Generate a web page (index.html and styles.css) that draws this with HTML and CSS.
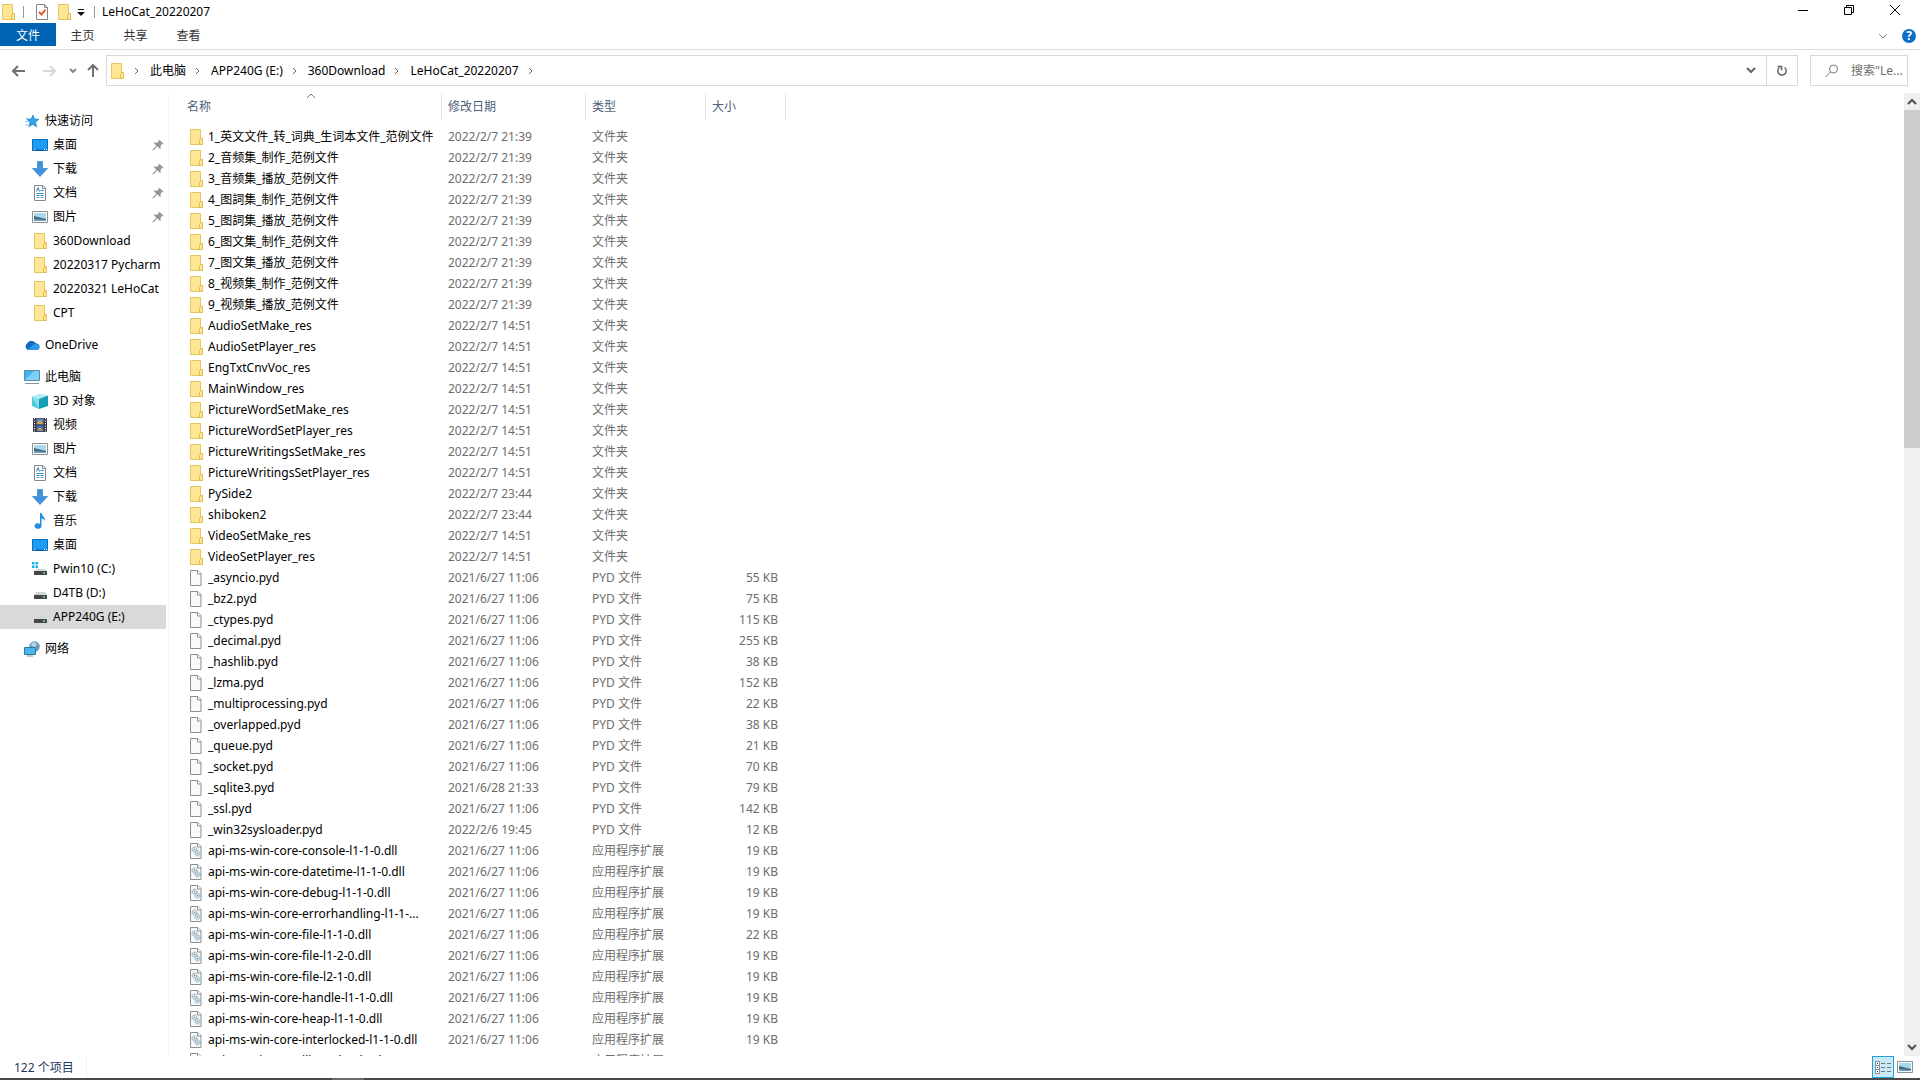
FILE: index.html
```
<!DOCTYPE html>
<html lang="zh-CN">
<head>
<meta charset="utf-8">
<title>LeHoCat_20220207</title>
<link rel="stylesheet" href="styles.css">
</head>
<body>
<svg class="sprite" aria-hidden="true">
  <symbol id="folder" viewBox="0 0 16 18"><path d="M2.500 1.500h10v15h-10z" fill="#ffe694" stroke="#e6c65c"/><path d="M12.500 10.500h2v6h-3v-4z" fill="#ffe694" stroke="#e0bd4b"/></symbol>
  <symbol id="file" viewBox="0 0 16 18"><path d="M2.500 1.500h7.500l3 3v12h-10.500z" fill="#f7f9fa" stroke="#8a8f93"/><path d="M9.500 1.500v3.500h3.500" fill="#fff" stroke="#8a8f93"/></symbol>
  <symbol id="dll" viewBox="0 0 16 18"><path d="M2.500 1.500h7.500l3 3v12h-10.500z" fill="#f7f9fa" stroke="#8a8f93"/><path d="M9.500 1.500v3.500h3.500" fill="#fff" stroke="#8a8f93"/><circle cx="6.500" cy="7.500" r="2.500" fill="#dfe6ea" stroke="#8d9aa3" stroke-dasharray="1.500 .6"/><circle cx="6.500" cy="7.500" r=".8" fill="#7d8a94"/><circle cx="9.500" cy="11.500" r="2.500" fill="#d5e6f0" stroke="#7ba3bd" stroke-dasharray="1.500 .6"/><circle cx="9.500" cy="11.500" r=".8" fill="#6c93ac"/></symbol>
  <symbol id="star" viewBox="0 0 16 16"><path d="M9 2l1.500 4 4.500.3-3.500 2.700 1.200 4.800-4-2.400-4 2.400 1.300-4.400-3-3 4.200-.4z" fill="#2fa4ea" stroke="#1d83c4" stroke-width=".7"/><path d="M2 5.500h3M1 8.500h3M1 12h3" stroke="#8bc9f0"/></symbol>
  <symbol id="desktop" viewBox="0 0 16 16"><path d="M.5 2.500h15v11h-15z" fill="#1e9df7" stroke="#0b6fc0"/><path d="M1 13h14" stroke="#0a5a9c"/><path d="M2 12.500h1M12 12.500h1M14 12.500h1" stroke="#fff"/></symbol>
  <symbol id="download" viewBox="0 0 16 16"><path d="M5.500 .5h5v7h5l-7.500 8-7.500-8h5z" fill="#3c93dd" stroke="#2a79be" stroke-width=".6"/></symbol>
  <symbol id="doc" viewBox="0 0 16 16"><path d="M2.500 .5h8.500l2.500 2.500v12.500h-11z" fill="#fff" stroke="#80868b"/><path d="M10.500 .5v3h3" fill="none" stroke="#80868b"/><path d="M4.500 6.500l1.500-4 1.500 4M8.500 5.500h3M4.500 8.500h7M4.500 10.500h3M8.500 10.500h3" fill="none" stroke="#2688cc"/><path d="M4.500 12.500h3M8.500 12.500h3" stroke="#7aa4bf"/></symbol>
  <symbol id="picture" viewBox="0 0 16 16"><path d="M.5 2.500h15v11h-15z" fill="#fff" stroke="#8b9095"/><path d="M2 4h12v8h-12z" fill="#a9d7ee"/><path d="M2 7l4 1 8 2v2h-12z" fill="#3f6b86"/><path d="M2 10l12 1v1h-12z" fill="#6da2bd"/></symbol>
  <symbol id="cloud" viewBox="0 0 16 16"><path d="M4 13a4 4 0 0 1-.5-7A5 5 0 0 1 12 6.500a3.300 3.300 0 0 1 1 6.500z" fill="#0f6cbd"/><path d="M3 13l7-6a4 4 0 0 1 3 0 3.200 3.200 0 0 1 .5 6z" fill="#2b9be8"/></symbol>
  <symbol id="pc" viewBox="0 0 16 16"><path d="M.5 1.500h15v10h-15z" fill="#46b3f0" stroke="#5d8aa6"/><path d="M1 11l9-9h5v9z" fill="#7fd0f8"/><path d="M1 14.500h14" stroke="#8898a3"/></symbol>
  <symbol id="cube" viewBox="0 0 16 16"><path d="M0 3.500l8-3 8 2-8 3.500z" fill="#b4edf5"/><path d="M0 3.500l7 2.500v10l-7-3z" fill="#4fc9da"/><path d="M7 6l9-3.500v10.500l-9 3z" fill="#149db6"/><path d="M0 3.500L7 16V6z" fill="#85deea"/></symbol>
  <symbol id="video" viewBox="0 0 16 16"><path d="M1 1h14v14h-14z" fill="#3d3d44"/><path d="M4.500 1.500h7v6h-7z" fill="#6385c4"/><path d="M4.500 8.500h7v6h-7z" fill="#426ab4"/><path d="M5 6l3-3 3 4h-6zM5 13l3-3 3 4z" fill="#d8a53a"/><path d="M2.500 1v14M13.500 1v14" stroke="#fff" stroke-dasharray="1 1.500"/></symbol>
  <symbol id="music" viewBox="0 0 16 16"><path d="M8 0h1.500c.5 3 4 4 3.500 8.500-.6-2-2-3-3.500-3v7.500a3.500 2.800 0 1 1-1.500-2.300z" fill="#1a8fe3"/></symbol>
  <symbol id="drive" viewBox="0 0 16 16"><path d="M4 7h9l2 3h-13z" fill="#d3d6d8"/><path d="M2 10h13v4h-13z" fill="#44484b"/><path d="M11 12h2" stroke="#65df61" stroke-width="1.500"/></symbol>
  <symbol id="windrive" viewBox="0 0 16 16"><path d="M4 8h9l2 3h-13z" fill="#d3d6d8"/><path d="M2 10h13v4h-13z" fill="#44484b"/><path d="M11 12h2" stroke="#65df61" stroke-width="1.500"/><path d="M0 1h2.500v2.500H0zM3.500 1H6v2.500H3.500zM0 4.500h2.500V7H0zM3.500 4.500H6V7H3.500z" fill="#1bb0e8"/></symbol>
  <symbol id="network" viewBox="0 0 16 16"><circle cx="10.500" cy="5.500" r="5.300" fill="#6d9ebc"/><path d="M7 3l3-2 3 2-2 3-3-1z" fill="#b9d6e6"/><path d="M.5 6.500h11v7h-11z" fill="#48b5f3" stroke="#32789f"/><path d="M3 15h6" stroke="#7f919d"/></symbol>
  <symbol id="pin" viewBox="0 0 12 12"><path d="M7 .5l4.500 4-1.500.5-1.500 2 .3 2.500-.8.500-2.700-2.700-3.800 4-.8-.2v-.8l3.700-3.500-2.600-2.500.7-.8 2.500.2 1.800-1.700z" fill="#8e979e"/></symbol>
</svg>

<header class="titlebar">
  <svg class="ico16"><use href="#folder"/></svg>
  <span class="bar"></span>
  <button class="quick" aria-label="属性"><svg class="ico16" viewBox="0 0 16 18"><path d="M2.500 1.500h8l3 3v12h-11z" fill="#fff" stroke="#8b8482"/><path d="M10.500 1.500v3h3" fill="none" stroke="#8b8482"/><path d="M5 9l2.500 2.500 4-5" fill="none" stroke="#e2582c" stroke-width="2"/></svg></button>
  <button class="quick" aria-label="新建文件夹"><svg class="ico16"><use href="#folder"/></svg></button>
  <button class="quick-menu" aria-label="自定义快速访问工具栏"><svg width="8" height="8" viewBox="0 0 8 8"><path d="M1 1.500h6" stroke="#111"/><path d="M0 4h8l-4 4z" fill="#111"/></svg></button>
  <span class="bar"></span>
  <h1 class="title">LeHoCat_20220207</h1>
  <div class="window-buttons">
    <button aria-label="最小化"><svg width="12" height="12"><path d="M1 6.500h10" stroke="#000"/></svg></button>
    <button aria-label="向下还原"><svg width="12" height="12"><path d="M1.500 3.500h7v7h-7zM3.500 3.500v-2h7v7h-2" fill="none" stroke="#000"/></svg></button>
    <button aria-label="关闭"><svg width="12" height="12"><path d="M1 1l10 10M11 1l-10 10" stroke="#000"/></svg></button>
  </div>
</header>

<nav class="ribbon">
  <button class="tab file-tab">文件</button>
  <button class="tab">主页</button>
  <button class="tab">共享</button>
  <button class="tab">查看</button>
  <div class="ribbon-end">
    <button aria-label="展开功能区"><svg width="10" height="6"><path d="M1 1l4 4 4-4" fill="none" stroke="#8a8a8a"/></svg></button>
    <button class="help" aria-label="帮助">?</button>
  </div>
</nav>

<div class="navbar">
  <div class="history">
    <button aria-label="后退"><svg width="14" height="12"><path d="M6 1l-5 5 5 5M1 6h12" fill="none" stroke="#707070" stroke-width="2"/></svg></button>
    <button aria-label="前进"><svg width="14" height="12"><path d="M8 1l5 5-5 5M13 6h-12" fill="none" stroke="#d8d8d8" stroke-width="2"/></svg></button>
    <button class="recent" aria-label="最近浏览的位置"><svg width="8" height="6"><path d="M1 1l3 3 3-3" fill="none" stroke="#888" stroke-width="2"/></svg></button>
    <button class="up" aria-label="向上"><svg width="12" height="13"><path d="M1 6l5-5 5 5M6 1v12" fill="none" stroke="#707070" stroke-width="2"/></svg></button>
  </div>
  <div class="address">
    <svg class="ico16"><use href="#folder"/></svg>
    <svg class="sep"><path d="M1 1l3 3-3 3"/></svg>
    <a href="#">此电脑</a><svg class="sep"><path d="M1 1l3 3-3 3"/></svg>
    <a href="#">APP240G (E:)</a><svg class="sep"><path d="M1 1l3 3-3 3"/></svg>
    <a href="#">360Download</a><svg class="sep"><path d="M1 1l3 3-3 3"/></svg>
    <a href="#">LeHoCat_20220207</a><svg class="sep"><path d="M1 1l3 3-3 3"/></svg>
    <div class="address-end">
      <button class="drop" aria-label="以前的位置"><svg width="10" height="7"><path d="M1 1l4 4 4-4" fill="none" stroke="#666" stroke-width="2"/></svg></button>
      <button class="refresh" aria-label="刷新"><svg width="12" height="12"><path d="M8.500 2.500a4.200 4.200 0 1 1-5 0" fill="none" stroke="#666" stroke-width="1.500"/><path d="M1.500 1.500h4v4" fill="none" stroke="#666" stroke-width="1.500"/></svg></button>
    </div>
  </div>
  <label class="search"><svg width="14" height="14"><circle cx="8.500" cy="5" r="4" fill="none" stroke="#777"/><path d="M5.500 8l-5 5" stroke="#777"/></svg><input type="text" aria-label="搜索" placeholder="搜索&quot;Le..."></label>
</div>

<main class="main">
  <aside class="tree">
    <ul>
      <li><a class="top" href="#"><svg><use href="#star"/></svg>快速访问</a></li>
      <li><a href="#"><svg><use href="#desktop"/></svg>桌面<svg class="pin"><use href="#pin"/></svg></a></li>
      <li><a href="#"><svg><use href="#download"/></svg>下载<svg class="pin"><use href="#pin"/></svg></a></li>
      <li><a href="#"><svg><use href="#doc"/></svg>文档<svg class="pin"><use href="#pin"/></svg></a></li>
      <li><a href="#"><svg><use href="#picture"/></svg>图片<svg class="pin"><use href="#pin"/></svg></a></li>
      <li><a href="#"><svg><use href="#folder"/></svg>360Download</a></li>
      <li><a href="#"><svg><use href="#folder"/></svg>20220317 Pycharm</a></li>
      <li><a href="#"><svg><use href="#folder"/></svg>20220321 LeHoCat</a></li>
      <li><a href="#"><svg><use href="#folder"/></svg>CPT</a></li>
    </ul>
    <ul>
      <li><a class="top" href="#"><svg><use href="#cloud"/></svg>OneDrive</a></li>
    </ul>
    <ul>
      <li><a class="top" href="#"><svg><use href="#pc"/></svg>此电脑</a></li>
      <li><a href="#"><svg><use href="#cube"/></svg>3D 对象</a></li>
      <li><a href="#"><svg><use href="#video"/></svg>视频</a></li>
      <li><a href="#"><svg><use href="#picture"/></svg>图片</a></li>
      <li><a href="#"><svg><use href="#doc"/></svg>文档</a></li>
      <li><a href="#"><svg><use href="#download"/></svg>下载</a></li>
      <li><a href="#"><svg><use href="#music"/></svg>音乐</a></li>
      <li><a href="#"><svg><use href="#desktop"/></svg>桌面</a></li>
      <li><a href="#"><svg><use href="#windrive"/></svg>Pwin10 (C:)</a></li>
      <li><a href="#"><svg><use href="#drive"/></svg>D4TB (D:)</a></li>
      <li><a class="selected" href="#"><svg><use href="#drive"/></svg>APP240G (E:)</a></li>
    </ul>
    <ul>
      <li><a class="top" href="#"><svg><use href="#network"/></svg>网络</a></li>
    </ul>
  </aside>

  <section class="files">
    <table>
      <thead>
        <tr><th class="name">名称<svg class="sort" width="10" height="6"><path d="M1 5l4-4 4 4" fill="none" stroke="#777"/></svg></th><th class="date">修改日期</th><th class="type">类型</th><th class="size">大小</th></tr>
      </thead>
      <tbody>
        <tr><td><svg><use href="#folder"/></svg>1_英文文件_转_词典_生词本文件_范例文件</td><td>2022/2/7 21:39</td><td>文件夹</td><td></td></tr>
        <tr><td><svg><use href="#folder"/></svg>2_音频集_制作_范例文件</td><td>2022/2/7 21:39</td><td>文件夹</td><td></td></tr>
        <tr><td><svg><use href="#folder"/></svg>3_音频集_播放_范例文件</td><td>2022/2/7 21:39</td><td>文件夹</td><td></td></tr>
        <tr><td><svg><use href="#folder"/></svg>4_图詞集_制作_范例文件</td><td>2022/2/7 21:39</td><td>文件夹</td><td></td></tr>
        <tr><td><svg><use href="#folder"/></svg>5_图詞集_播放_范例文件</td><td>2022/2/7 21:39</td><td>文件夹</td><td></td></tr>
        <tr><td><svg><use href="#folder"/></svg>6_图文集_制作_范例文件</td><td>2022/2/7 21:39</td><td>文件夹</td><td></td></tr>
        <tr><td><svg><use href="#folder"/></svg>7_图文集_播放_范例文件</td><td>2022/2/7 21:39</td><td>文件夹</td><td></td></tr>
        <tr><td><svg><use href="#folder"/></svg>8_视频集_制作_范例文件</td><td>2022/2/7 21:39</td><td>文件夹</td><td></td></tr>
        <tr><td><svg><use href="#folder"/></svg>9_视频集_播放_范例文件</td><td>2022/2/7 21:39</td><td>文件夹</td><td></td></tr>
        <tr><td><svg><use href="#folder"/></svg>AudioSetMake_res</td><td>2022/2/7 14:51</td><td>文件夹</td><td></td></tr>
        <tr><td><svg><use href="#folder"/></svg>AudioSetPlayer_res</td><td>2022/2/7 14:51</td><td>文件夹</td><td></td></tr>
        <tr><td><svg><use href="#folder"/></svg>EngTxtCnvVoc_res</td><td>2022/2/7 14:51</td><td>文件夹</td><td></td></tr>
        <tr><td><svg><use href="#folder"/></svg>MainWindow_res</td><td>2022/2/7 14:51</td><td>文件夹</td><td></td></tr>
        <tr><td><svg><use href="#folder"/></svg>PictureWordSetMake_res</td><td>2022/2/7 14:51</td><td>文件夹</td><td></td></tr>
        <tr><td><svg><use href="#folder"/></svg>PictureWordSetPlayer_res</td><td>2022/2/7 14:51</td><td>文件夹</td><td></td></tr>
        <tr><td><svg><use href="#folder"/></svg>PictureWritingsSetMake_res</td><td>2022/2/7 14:51</td><td>文件夹</td><td></td></tr>
        <tr><td><svg><use href="#folder"/></svg>PictureWritingsSetPlayer_res</td><td>2022/2/7 14:51</td><td>文件夹</td><td></td></tr>
        <tr><td><svg><use href="#folder"/></svg>PySide2</td><td>2022/2/7 23:44</td><td>文件夹</td><td></td></tr>
        <tr><td><svg><use href="#folder"/></svg>shiboken2</td><td>2022/2/7 23:44</td><td>文件夹</td><td></td></tr>
        <tr><td><svg><use href="#folder"/></svg>VideoSetMake_res</td><td>2022/2/7 14:51</td><td>文件夹</td><td></td></tr>
        <tr><td><svg><use href="#folder"/></svg>VideoSetPlayer_res</td><td>2022/2/7 14:51</td><td>文件夹</td><td></td></tr>
        <tr><td><svg><use href="#file"/></svg>_asyncio.pyd</td><td>2021/6/27 11:06</td><td>PYD 文件</td><td>55 KB</td></tr>
        <tr><td><svg><use href="#file"/></svg>_bz2.pyd</td><td>2021/6/27 11:06</td><td>PYD 文件</td><td>75 KB</td></tr>
        <tr><td><svg><use href="#file"/></svg>_ctypes.pyd</td><td>2021/6/27 11:06</td><td>PYD 文件</td><td>115 KB</td></tr>
        <tr><td><svg><use href="#file"/></svg>_decimal.pyd</td><td>2021/6/27 11:06</td><td>PYD 文件</td><td>255 KB</td></tr>
        <tr><td><svg><use href="#file"/></svg>_hashlib.pyd</td><td>2021/6/27 11:06</td><td>PYD 文件</td><td>38 KB</td></tr>
        <tr><td><svg><use href="#file"/></svg>_lzma.pyd</td><td>2021/6/27 11:06</td><td>PYD 文件</td><td>152 KB</td></tr>
        <tr><td><svg><use href="#file"/></svg>_multiprocessing.pyd</td><td>2021/6/27 11:06</td><td>PYD 文件</td><td>22 KB</td></tr>
        <tr><td><svg><use href="#file"/></svg>_overlapped.pyd</td><td>2021/6/27 11:06</td><td>PYD 文件</td><td>38 KB</td></tr>
        <tr><td><svg><use href="#file"/></svg>_queue.pyd</td><td>2021/6/27 11:06</td><td>PYD 文件</td><td>21 KB</td></tr>
        <tr><td><svg><use href="#file"/></svg>_socket.pyd</td><td>2021/6/27 11:06</td><td>PYD 文件</td><td>70 KB</td></tr>
        <tr><td><svg><use href="#file"/></svg>_sqlite3.pyd</td><td>2021/6/28 21:33</td><td>PYD 文件</td><td>79 KB</td></tr>
        <tr><td><svg><use href="#file"/></svg>_ssl.pyd</td><td>2021/6/27 11:06</td><td>PYD 文件</td><td>142 KB</td></tr>
        <tr><td><svg><use href="#file"/></svg>_win32sysloader.pyd</td><td>2022/2/6 19:45</td><td>PYD 文件</td><td>12 KB</td></tr>
        <tr><td><svg><use href="#dll"/></svg>api-ms-win-core-console-l1-1-0.dll</td><td>2021/6/27 11:06</td><td>应用程序扩展</td><td>19 KB</td></tr>
        <tr><td><svg><use href="#dll"/></svg>api-ms-win-core-datetime-l1-1-0.dll</td><td>2021/6/27 11:06</td><td>应用程序扩展</td><td>19 KB</td></tr>
        <tr><td><svg><use href="#dll"/></svg>api-ms-win-core-debug-l1-1-0.dll</td><td>2021/6/27 11:06</td><td>应用程序扩展</td><td>19 KB</td></tr>
        <tr><td><svg><use href="#dll"/></svg>api-ms-win-core-errorhandling-l1-1-...</td><td>2021/6/27 11:06</td><td>应用程序扩展</td><td>19 KB</td></tr>
        <tr><td><svg><use href="#dll"/></svg>api-ms-win-core-file-l1-1-0.dll</td><td>2021/6/27 11:06</td><td>应用程序扩展</td><td>22 KB</td></tr>
        <tr><td><svg><use href="#dll"/></svg>api-ms-win-core-file-l1-2-0.dll</td><td>2021/6/27 11:06</td><td>应用程序扩展</td><td>19 KB</td></tr>
        <tr><td><svg><use href="#dll"/></svg>api-ms-win-core-file-l2-1-0.dll</td><td>2021/6/27 11:06</td><td>应用程序扩展</td><td>19 KB</td></tr>
        <tr><td><svg><use href="#dll"/></svg>api-ms-win-core-handle-l1-1-0.dll</td><td>2021/6/27 11:06</td><td>应用程序扩展</td><td>19 KB</td></tr>
        <tr><td><svg><use href="#dll"/></svg>api-ms-win-core-heap-l1-1-0.dll</td><td>2021/6/27 11:06</td><td>应用程序扩展</td><td>19 KB</td></tr>
        <tr><td><svg><use href="#dll"/></svg>api-ms-win-core-interlocked-l1-1-0.dll</td><td>2021/6/27 11:06</td><td>应用程序扩展</td><td>19 KB</td></tr>
        <tr><td><svg><use href="#dll"/></svg>api-ms-win-core-libraryloader-l1-1-...</td><td>2021/6/27 11:06</td><td>应用程序扩展</td><td>19 KB</td></tr>
      </tbody>
    </table>
  </section>

  <div class="scroll">
    <button aria-label="向上滚动"><svg width="10" height="7"><path d="M1 6l4-4 4 4" fill="none" stroke="#505050" stroke-width="2"/></svg></button>
    <div class="thumb"></div>
    <div class="track"></div>
    <button aria-label="向下滚动"><svg width="10" height="7"><path d="M1 1l4 4 4-4" fill="none" stroke="#505050" stroke-width="2"/></svg></button>
  </div>
</main>

<footer class="status">
  <span class="count">122 个项目</span>
  <div class="views">
    <button class="active" aria-label="详细信息"><svg width="18" height="14"><path d="M1.500 1.500h4v4h-4zM1.500 5.500h4v4h-4zM1.500 9.500h4v4h-4z" fill="#fff" stroke="#8a8fa0"/><path d="M3 3.500h1M3 7.500h1M3 11.500h1" stroke="#333"/><path d="M7 3.500h4M13 3.500h4M7 7.500h4M13 7.500h4M7 11.500h4M13 11.500h4" stroke="#777"/></svg></button>
    <button aria-label="大缩略图"><svg width="16" height="16"><use href="#picture"/></svg></button>
  </div>
</footer>
<div class="taskbar-edge"></div>
</body>
</html>
```
FILE: styles.css
```
* { box-sizing: border-box; }
body {
  margin: 0;
  height: 100vh;
  display: flex;
  flex-direction: column;
  overflow: hidden;
  background: #fff;
  color: #000;
  font: 12px/20px "Noto Sans", "Noto Sans CJK SC", sans-serif;
}
button {
  font: inherit;
  color: inherit;
  border: 0;
  padding: 0;
  background: none;
  display: flex;
  align-items: center;
  justify-content: center;
}
a { color: inherit; text-decoration: none; }
svg { display: block; flex: none; }
.sprite { width: 0; height: 0; position: absolute; }
.ico16 { width: 16px; height: 18px; }

.titlebar { display: flex; align-items: center; height: 23px; flex: none; }
.titlebar .bar { width: 1px; height: 12px; margin: 0 7px; background: #999; }
.quick { min-width: 16px; margin: 0 3px; }
.quick-menu { margin: 0 2px; }
.title { margin: 0; font-size: 12px; line-height: 20px; font-weight: 400; }
.window-buttons { display: flex; margin-left: auto; margin-right: 2px; align-self: flex-start; }
.window-buttons button { width: 46px; height: 20px; }

.ribbon { display: flex; height: 27px; flex: none; border-bottom: 1px solid #dadbdc; color: #333; }
.tab { width: 53px; height: 23px; padding-top: 2px; }
.file-tab { width: 56px; background: #0063b1; color: #fff; }
.ribbon-end { display: flex; align-items: center; gap: 14px; margin-left: auto; padding-right: 4px; }
.help { width: 14px; height: 14px; border-radius: 50%; background: #0a6fc9; color: #fff; font-weight: 700; line-height: 14px; }

.navbar { display: flex; height: 43px; flex: none; padding: 5px 12px 7px 12px; }
.history { display: flex; align-items: center; width: 94px; gap: 16px; }
.history .recent { margin-left: -3px; }
.history .up { margin-left: -6px; }
.address { display: flex; align-items: center; flex: 1; border: 1px solid #d9d9d9; padding-left: 2px; margin-right: 12px; }
.sep { width: 6px; height: 8px; margin: 0 10px 0 9px; fill: none; stroke: #666; stroke-width: 1; }
.address-end { display: flex; height: 100%; margin-left: auto; }
.drop { width: 30px; }
.refresh { width: 31px; border-left: 1px solid #d9d9d9; }
.search { display: flex; align-items: center; gap: 12px; width: 98px; border: 1px solid #d9d9d9; padding-left: 14px; }
.search input { width: 56px; border: 0; padding: 0; outline: 0; font: inherit; background: none; }
.search input::placeholder { color: #6d6d6d; opacity: 1; }

.main { display: flex; flex: 1; min-height: 0; }
.tree { width: 169px; border-right: 1px solid #f5f5f5; padding-top: 16px; }
.tree ul { list-style: none; margin: 0 0 8px; padding: 0; }
.tree a { display: flex; align-items: center; gap: 5px; height: 24px; width: 166px; padding-left: 32px; white-space: nowrap; }
.tree a.top { padding-left: 24px; }
.tree svg { width: 16px; height: 18px; }
.tree .pin { width: 12px; height: 12px; margin-left: auto; margin-right: 2px; }
.tree .selected { background: #d9d9d9; }

.files { flex: 1; overflow: hidden; padding-left: 18px; }
table { width: 599px; table-layout: fixed; border-collapse: separate; border-spacing: 0; }
th { position: relative; height: 27px; padding: 0 0 0 6px; text-align: left; font-weight: 400; color: #4c607a; border-right: 1px solid #e5e5e5; }
th.name { width: 255px; padding-left: 0; }
th.date { width: 144px; }
th.type { width: 120px; }
th.size { width: 80px; }
.sort { position: absolute; top: 0; left: 50%; margin-left: -8px; }
tbody::before { content: ""; display: block; height: 6px; }
td { height: 21px; padding: 0 0 0 6px; color: #6d6d6d; white-space: nowrap; line-height: 20px; }
td:first-child { display: flex; align-items: center; gap: 4px; padding-left: 1px; color: #000; }
td:last-child { text-align: right; padding-right: 8px; }
td svg { width: 16px; height: 18px; }

.scroll { display: flex; flex-direction: column; width: 16px; background: #f0f0f0; }
.scroll button { height: 17px; }
.thumb { flex: 4; background: #cdcdcd; }
.track { flex: 7; }

.status { display: flex; align-items: center; height: 22px; flex: none; padding-left: 14px; color: #1e395b; }
.count { padding: 2px 12px 0 0; border-right: 1px solid #f0f0f0; }
.views { display: flex; margin-left: auto; height: 22px; padding-right: 4px; }
.views button { width: 22px; }
.views .active { background: #cbe8f6; border: 1px solid #26a0da; }
.taskbar-edge { height: 2px; flex: none; background: linear-gradient(#6a6a6a, #6a6a6a) 332px 0 / 32px 2px no-repeat #4a4a4a; }
```
